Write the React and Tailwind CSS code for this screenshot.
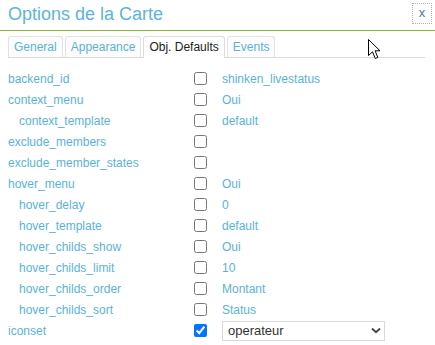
const rows = [
  { label: "backend_id", value: "shinken_livestatus" },
  { label: "context_menu", value: "Oui" },
  { label: "context_template", value: "default", sub: true },
  { label: "exclude_members", value: "" },
  { label: "exclude_member_states", value: "" },
  { label: "hover_menu", value: "Oui" },
  { label: "hover_delay", value: "0", sub: true },
  { label: "hover_template", value: "default", sub: true },
  { label: "hover_childs_show", value: "Oui", sub: true },
  { label: "hover_childs_limit", value: "10", sub: true },
  { label: "hover_childs_order", value: "Montant", sub: true },
  { label: "hover_childs_sort", value: "Status", sub: true },
];

const tabs = ["General", "Appearance", "Obj. Defaults", "Events"];

function Cursor() {
  return (
    <svg
      className="absolute left-[368px] top-[39px]"
      width="13"
      height="21"
      viewBox="0 0 13 21"
    >
      <path
        d="M0.5 0.5 L0.5 16.5 L4.5 12.8 L7.3 19.5 L9.8 18.4 L7.1 11.8 L12 11.8 Z"
        fill="#fff"
        stroke="#000"
        strokeWidth="1"
        strokeLinejoin="round"
      />
    </svg>
  );
}

export default function App() {
  return (
    <div className="relative h-[345px] w-[435px] overflow-hidden bg-white font-['Liberation_Sans',Arial,sans-serif]">
      <div className="flex h-[31px] items-start justify-between border-b border-[#8db33a]">
        <h1 className="pl-2 pt-1 text-[18px] leading-[20px] text-[#5cb5d8]">
          Options de la Carte
        </h1>
        <button className="mr-[3px] mt-[3px] flex h-[21px] w-[20px] items-center justify-center border border-dotted border-[#b0b0b0] pb-[2px] text-[13px] leading-none text-[#5a7894]">
          x
        </button>
      </div>

      <div className="ml-2 mr-[10px] mt-[5px] flex items-end gap-[2px] border-b border-[#dcdcdc]">
        {tabs.map((tab) =>
          tab === "Obj. Defaults" ? (
            <div
              key={tab}
              className="-mb-px h-[22px] rounded-t-[3px] border border-b-0 border-[#dcdcdc] bg-white px-[5px] text-[12px] leading-[20px] text-[#222]"
            >
              {tab}
            </div>
          ) : (
            <div
              key={tab}
              className="h-[21px] rounded-t-[3px] border border-b-0 border-[#e2e2e2] bg-[#fcfcfc] px-[5px] text-[12px] leading-[20px] text-[#5ab3d7]"
            >
              {tab}
            </div>
          )
        )}
      </div>

      <div className="mt-[10px] px-2">
        {rows.map((row) => (
          <div key={row.label} className="flex h-[21px] items-center text-[12px] text-[#5ab3d7]">
            <span className={`w-[186px] ${row.sub ? "pl-[11px]" : ""}`}>{row.label}</span>
            <input type="checkbox" readOnly className="m-0 h-[13px] w-[13px]" />
            <span className="ml-[15px]">{row.value}</span>
          </div>
        ))}
        <div className="flex h-[21px] items-center text-[12px] text-[#5ab3d7]">
          <span className="w-[186px]">iconset</span>
          <input type="checkbox" readOnly checked className="m-0 h-[13px] w-[13px]" />
          <div className="ml-[15px] flex h-[20px] w-[163px] items-center justify-between border border-[#d9d9d9] bg-white pl-[5px] pr-[3px] text-[13px] text-[#333]">
            <span>operateur</span>
            <svg width="10" height="7" viewBox="0 0 10 7">
              <path d="M1 1.5 L5 5.2 L9 1.5" fill="none" stroke="#444" strokeWidth="1.8" />
            </svg>
          </div>
        </div>
      </div>

      <Cursor />
    </div>
  );
}
